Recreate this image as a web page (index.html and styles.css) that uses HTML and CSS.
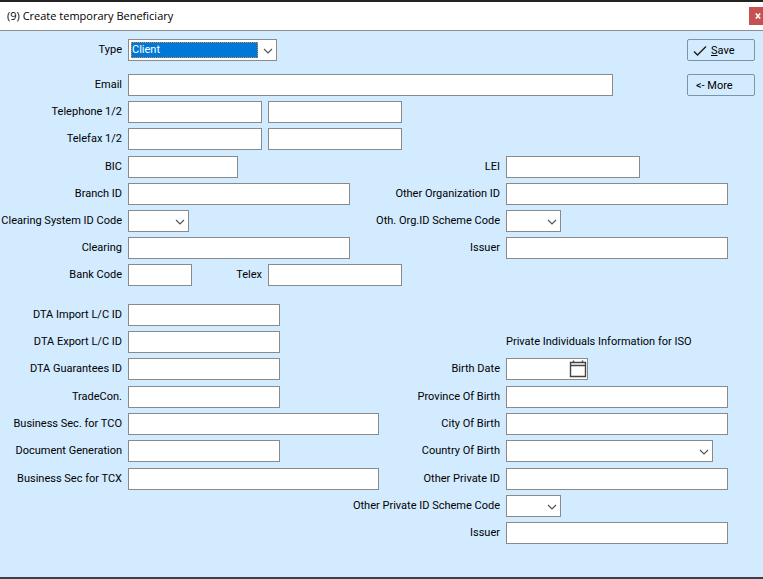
FILE: index.html
```
<!DOCTYPE html>
<html lang="en">
<head>
    <meta charset="UTF-8">
    <meta name="viewport" content="width=device-width, initial-scale=1.0">
    <title>(9) Create temporary Beneficiary</title>
    <link rel="stylesheet" href="styles.css">
</head>
<body>
    <svg class="defs" aria-hidden="true">
        <symbol id="chevron" viewBox="0 0 10 6">
            <path d="M1 1 L5 5 L9 1" fill="none" stroke="#555" stroke-width="1.2"/>
        </symbol>
    </svg>

    <div class="window">
        <header class="titlebar">
            <h1>(9) Create temporary Beneficiary</h1>
            <button type="button" class="close" aria-label="Close">
                <svg viewBox="0 0 6 6" width="6" height="6"><path d="M0.8 0.5 L5.2 5.5 M5.2 0.5 L0.8 5.5" stroke="#fff" stroke-width="1.7"/></svg>
            </button>
        </header>

        <form class="form">
            <div class="top">
                <div class="top-fields">
                    <div class="field">
                        <label for="type">Type</label>
                        <span class="combo combo-active w-type">
                            <select id="type"><option>Client</option></select>
                            <svg class="arrow"><use href="#chevron"/></svg>
                        </span>
                    </div>
                    <div class="field">
                        <label for="email">Email</label>
                        <input type="text" id="email" class="grow">
                    </div>
                </div>
                <div class="buttons">
                    <button type="submit">
                        <svg viewBox="0 0 14 12" width="14" height="12"><path d="M1 6.5 L4.5 10 L13 1.5" fill="none" stroke="#222" stroke-width="1.5"/></svg>
                        <span><u>S</u>ave</span>
                    </button>
                    <button type="button" class="more">&lt;- More</button>
                </div>
            </div>

            <div class="group">
                <div class="row">
                    <div class="field">
                        <label for="tel1">Telephone 1/2</label>
                        <input type="text" id="tel1" class="w-phone">
                        <input type="text" id="tel2" class="w-phone" aria-label="Telephone 2">
                    </div>
                </div>
                <div class="row">
                    <div class="field">
                        <label for="fax1">Telefax 1/2</label>
                        <input type="text" id="fax1" class="w-phone">
                        <input type="text" id="fax2" class="w-phone" aria-label="Telefax 2">
                    </div>
                </div>
            </div>

            <div class="group">
                <div class="row">
                    <div class="field">
                        <label for="bic">BIC</label>
                        <input type="text" id="bic" class="w-bic">
                    </div>
                    <div class="field right">
                        <label for="lei">LEI</label>
                        <div class="control"><input type="text" id="lei" class="w-phone"></div>
                    </div>
                </div>
                <div class="row">
                    <div class="field">
                        <label for="branch">Branch ID</label>
                        <input type="text" id="branch" class="w-long">
                    </div>
                    <div class="field right">
                        <label for="org-id">Other Organization ID</label>
                        <div class="control"><input type="text" id="org-id" class="w-long"></div>
                    </div>
                </div>
                <div class="row">
                    <div class="field">
                        <label for="clearing-code">Clearing System ID Code</label>
                        <span class="combo w-clearing">
                            <select id="clearing-code"><option></option></select>
                            <svg class="arrow"><use href="#chevron"/></svg>
                        </span>
                    </div>
                    <div class="field right">
                        <label for="org-scheme">Oth. Org.ID Scheme Code</label>
                        <div class="control">
                            <span class="combo w-scheme">
                                <select id="org-scheme"><option></option></select>
                                <svg class="arrow"><use href="#chevron"/></svg>
                            </span>
                        </div>
                    </div>
                </div>
                <div class="row">
                    <div class="field">
                        <label for="clearing">Clearing</label>
                        <input type="text" id="clearing" class="w-long">
                    </div>
                    <div class="field right">
                        <label for="org-issuer">Issuer</label>
                        <div class="control"><input type="text" id="org-issuer" class="w-long"></div>
                    </div>
                </div>
                <div class="row">
                    <div class="field">
                        <label for="bank-code">Bank Code</label>
                        <input type="text" id="bank-code" class="w-code">
                        <label for="telex" class="label-telex">Telex</label>
                        <input type="text" id="telex" class="w-phone">
                    </div>
                </div>
            </div>

            <div class="group group-dta">
                <div class="row">
                    <div class="field">
                        <label for="dta-import">DTA Import L/C ID</label>
                        <input type="text" id="dta-import" class="w-dta">
                    </div>
                </div>
                <div class="row">
                    <div class="field">
                        <label for="dta-export">DTA Export L/C ID</label>
                        <input type="text" id="dta-export" class="w-dta">
                    </div>
                    <div class="field right">
                        <h2 class="control">Private Individuals Information for ISO</h2>
                    </div>
                </div>
                <div class="row">
                    <div class="field">
                        <label for="dta-guarantees">DTA Guarantees ID</label>
                        <input type="text" id="dta-guarantees" class="w-dta">
                    </div>
                    <div class="field right">
                        <label for="birth-date">Birth Date</label>
                        <div class="control">
                            <span class="date">
                                <input type="text" id="birth-date">
                                <button type="button" aria-label="Pick date">
                                    <svg viewBox="0 0 18 18" width="18" height="18">
                                        <path d="M1.5 2.5 H16.5 V16.5 H1.5 Z M1.5 5.5 H16.5" fill="none" stroke="#444" stroke-width="1.4"/>
                                        <path d="M4.5 0.5 V3 M13.5 0.5 V3" stroke="#444" stroke-width="1.4"/>
                                    </svg>
                                </button>
                            </span>
                        </div>
                    </div>
                </div>
            </div>

            <div class="group">
                <div class="row">
                    <div class="field">
                        <label for="tradecon">TradeCon.</label>
                        <input type="text" id="tradecon" class="w-dta">
                    </div>
                    <div class="field right">
                        <label for="province">Province Of Birth</label>
                        <div class="control"><input type="text" id="province" class="w-long"></div>
                    </div>
                </div>
                <div class="row">
                    <div class="field">
                        <label for="sec-tco">Business Sec. for TCO</label>
                        <input type="text" id="sec-tco" class="w-sec">
                    </div>
                    <div class="field right">
                        <label for="city">City Of Birth</label>
                        <div class="control"><input type="text" id="city" class="w-long"></div>
                    </div>
                </div>
                <div class="row">
                    <div class="field">
                        <label for="doc-gen">Document Generation</label>
                        <input type="text" id="doc-gen" class="w-dta">
                    </div>
                    <div class="field right">
                        <label for="country">Country Of Birth</label>
                        <div class="control">
                            <span class="combo w-country">
                                <select id="country"><option></option></select>
                                <svg class="arrow"><use href="#chevron"/></svg>
                            </span>
                        </div>
                    </div>
                </div>
            </div>

            <div class="group">
                <div class="row">
                    <div class="field">
                        <label for="sec-tcx">Business Sec for TCX</label>
                        <input type="text" id="sec-tcx" class="w-sec">
                    </div>
                    <div class="field right">
                        <label for="private-id">Other Private ID</label>
                        <div class="control"><input type="text" id="private-id" class="w-long"></div>
                    </div>
                </div>
                <div class="row">
                    <div class="field right">
                        <label for="private-scheme">Other Private ID Scheme Code</label>
                        <div class="control">
                            <span class="combo w-scheme">
                                <select id="private-scheme"><option></option></select>
                                <svg class="arrow"><use href="#chevron"/></svg>
                            </span>
                        </div>
                    </div>
                </div>
                <div class="row">
                    <div class="field right">
                        <label for="private-issuer">Issuer</label>
                        <div class="control"><input type="text" id="private-issuer" class="w-long"></div>
                    </div>
                </div>
            </div>
        </form>
    </div>
</body>
</html>
```
FILE: styles.css
```
* {
    box-sizing: border-box;
}

body {
    margin: 0;
    font-family: Roboto, Arial, sans-serif;
    font-size: 11px;
    line-height: 22px;
    color: #000;
}

input,
select,
button {
    margin: 0;
    font: inherit;
    color: inherit;
}

.defs {
    display: none;
}

.window {
    display: flex;
    flex-direction: column;
    min-height: 100vh;
    background: #d3ebff;
    border-top: 2px solid #222;
    border-bottom: 2px solid #3c3f44;
}

/* title bar */
.titlebar {
    display: flex;
    justify-content: space-between;
    align-items: center;
    height: 29px;
    padding-left: 7px;
    background: #fff;
    border-bottom: 1px solid #8c8c8c;
}

.titlebar h1 {
    margin: 0;
    font-family: "Open Sans", "Segoe UI", sans-serif;
    font-size: 11px;
    font-weight: normal;
}

.close {
    display: flex;
    align-items: center;
    justify-content: center;
    width: 14px;
    height: 18px;
    padding: 0 0 0 3px;
    border: none;
    background: #c75050;
}

/* form */
.form {
    padding-top: 8px;
}

.top {
    display: flex;
    gap: 74px;
    margin-bottom: 5px;
    padding-right: 8px;
}

.top-fields,
.buttons {
    display: flex;
    flex-direction: column;
    gap: 13px;
}

.top-fields {
    flex: 1;
}

.buttons button {
    display: flex;
    align-items: center;
    gap: 4px;
    width: 68px;
    height: 22px;
    padding: 1px 5px 0;
    background: #d3ebff;
    border: 1px solid #7e93a6;
    border-radius: 2px;
}

.buttons .more {
    padding-left: 8px;
}

.group {
    display: flex;
    flex-direction: column;
    gap: 5px;
    margin-bottom: 6px;
}

.group-dta {
    margin-top: 18px;
}

.row {
    display: flex;
    padding-right: 35px;
}

.field {
    display: flex;
    gap: 6px;
    height: 22px;
}

.field label {
    width: 122px;
    text-align: right;
    white-space: nowrap;
}

.field .label-telex {
    width: 64px;
}

.right {
    margin-left: auto;
}

.field.right label {
    width: auto;
}

.control {
    display: flex;
    width: 222px;
    margin: 0;
    font-size: 11px;
    font-weight: normal;
}

input,
.combo,
.date {
    height: 22px;
    padding: 0 3px;
    background: #fff;
    border: 1px solid #8a8a8a;
    border-radius: 0;
}

.grow {
    flex: 1;
}

.combo {
    position: relative;
    display: flex;
    padding: 0;
}

.combo select {
    width: 100%;
    padding: 0 18px 0 3px;
    appearance: none;
    background: none;
    border: none;
    border-radius: 0;
}

.arrow {
    position: absolute;
    top: 8px;
    right: 3px;
    width: 10px;
    height: 6px;
    pointer-events: none;
}

.combo-active select {
    margin: 2px 18px 2px 2px;
    padding: 0;
    line-height: 14px;
    color: #fff;
    background: #0078d7;
    border: 1px dotted #d98b3a;
}

.date {
    display: flex;
    align-items: center;
    width: 82px;
    padding: 0;
}

.date input {
    flex: 1;
    min-width: 0;
    height: 20px;
    border: none;
}

.date button {
    display: flex;
    padding: 0;
    background: none;
    border: none;
}

/* control widths */
.w-type { width: 149px; }
.w-phone { width: 134px; }
.w-bic { width: 110px; }
.w-long { width: 222px; }
.w-clearing { width: 61px; }
.w-scheme { width: 55px; }
.w-code { width: 64px; }
.w-dta { width: 152px; }
.w-sec { width: 251px; }
.w-country { width: 207px; }
```
